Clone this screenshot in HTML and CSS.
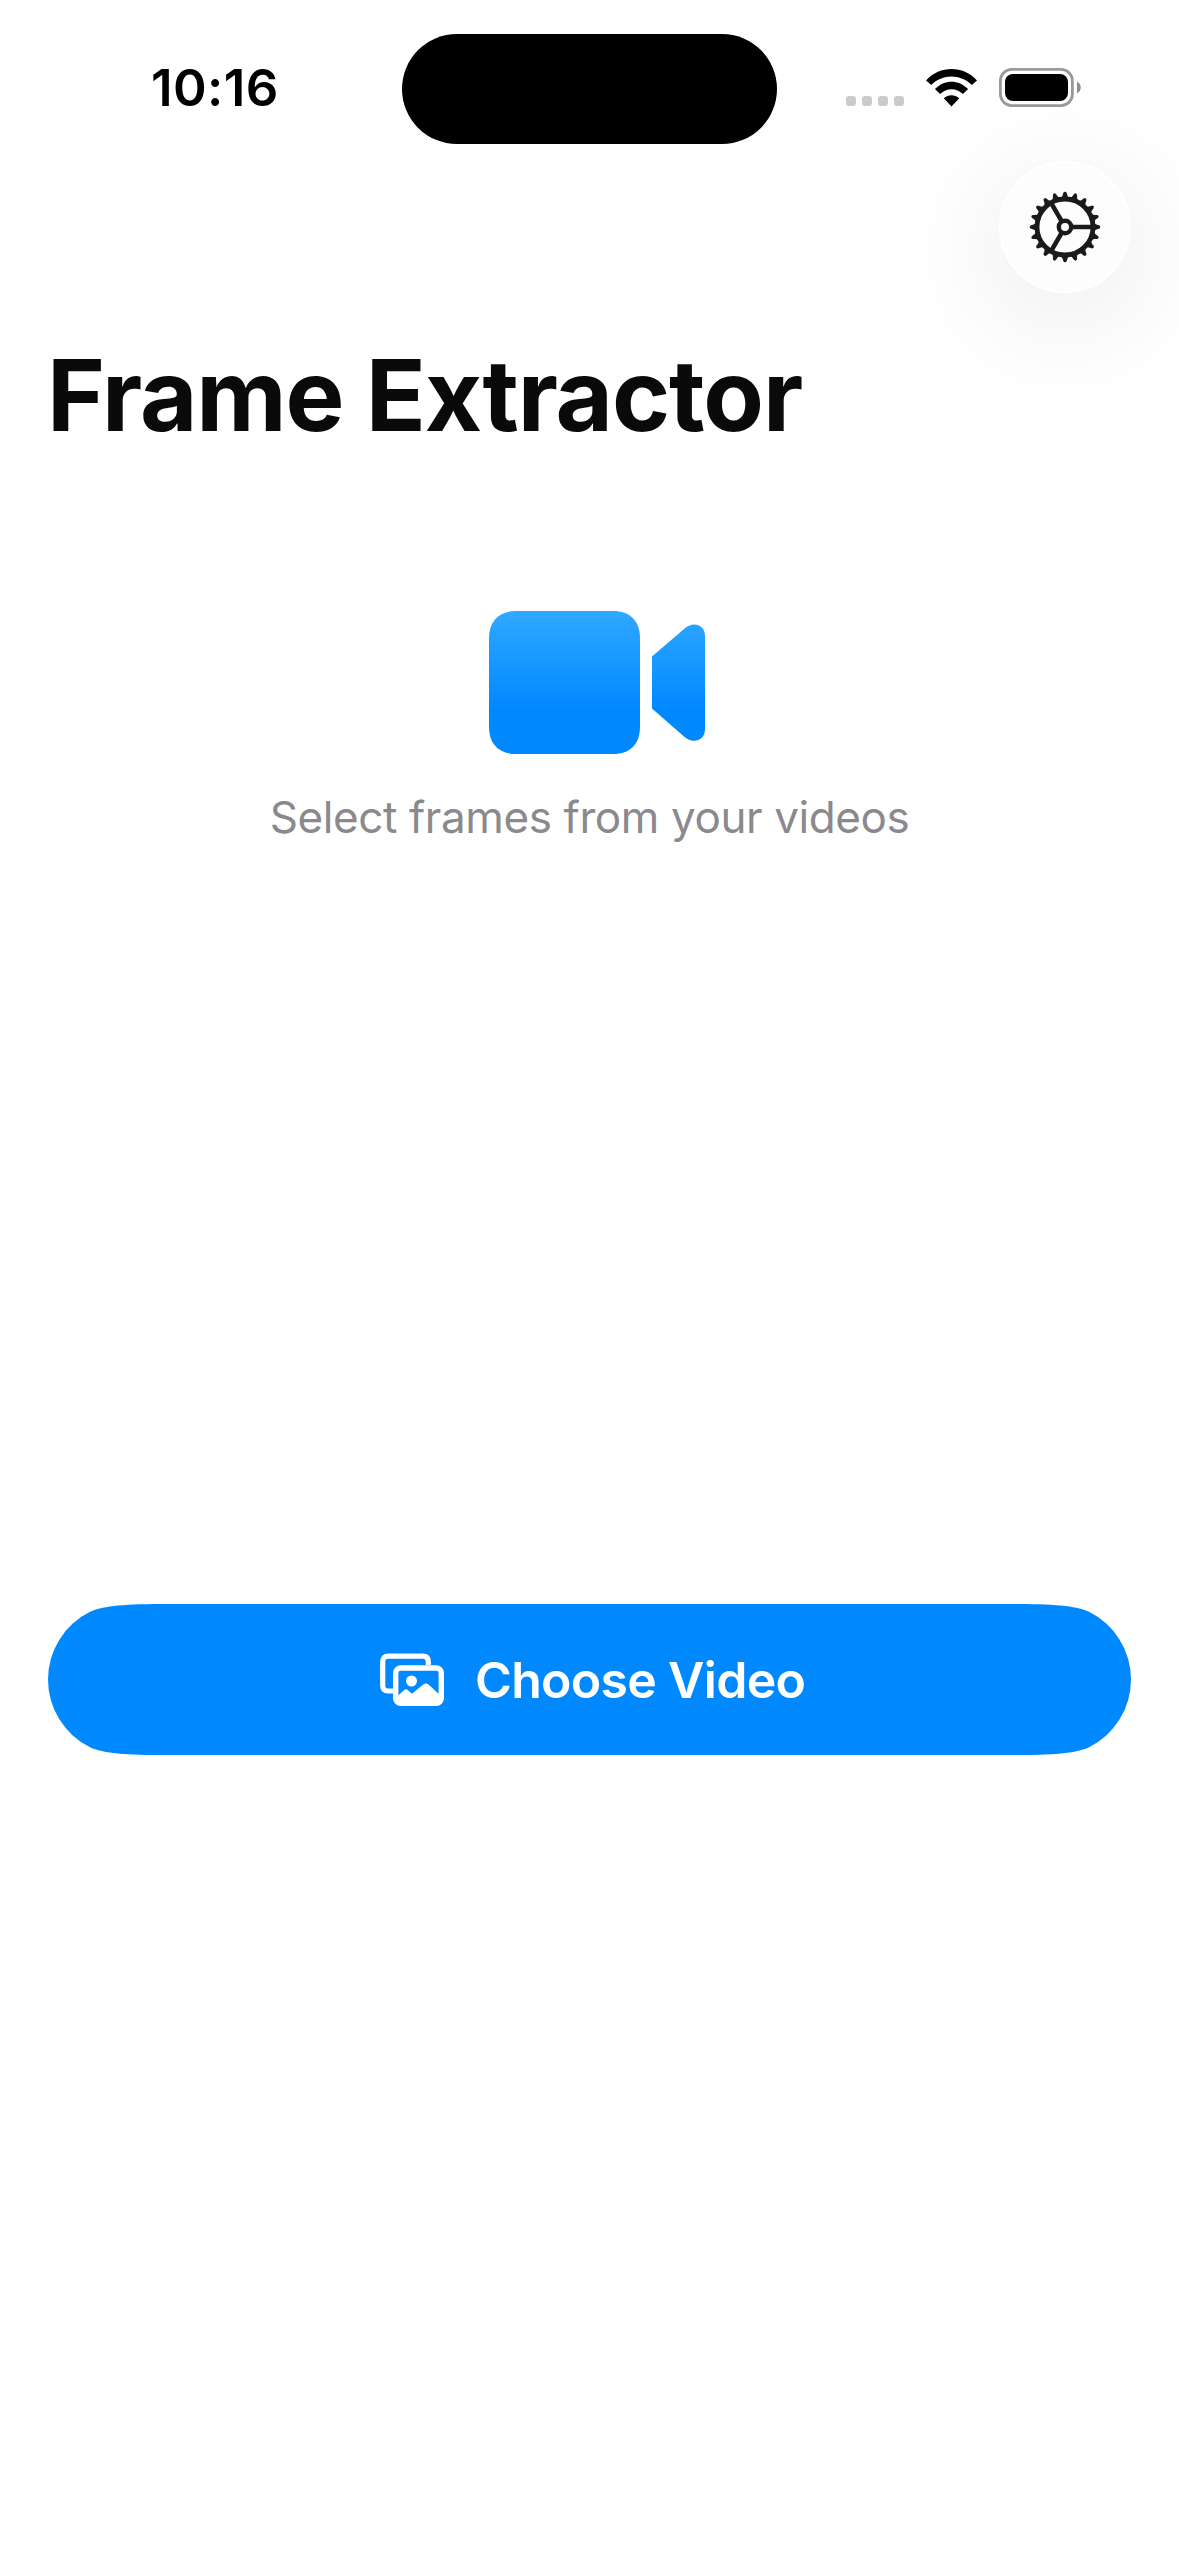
FILE: index.html
```html
<!DOCTYPE html>
<html lang="en">
<head>
<meta charset="utf-8">
<title>Frame Extractor</title>
<link rel="stylesheet" href="styles.css">
</head>
<body>
<div class="screen">
  <header class="status">
    <div class="status-left"><span class="time">10:16</span></div>
    <div class="island"></div>
    <div class="status-right">
      <div class="signal"><i></i><i></i><i></i><i></i></div>
      <svg class="wifi" width="51" height="38" viewBox="0 0 51 38">
        <path d="M0 11.400C14-3.700 37-3.700 51 11.400L45.800 16C34.500 4.500 16.500 4.500 5.200 16Z"/>
        <path d="M8.900 20C18.500 10.200 32.500 10.200 42.100 20L36.900 25C30.500 18.600 20.500 18.600 14.100 25Z"/>
        <path d="M17.800 29.300C22.300 25.100 28.700 25.100 33.200 29.300L25.500 37.500Z"/>
      </svg>
      <svg class="battery" width="82" height="39" viewBox="0 0 82 39">
        <rect x="1.400" y="1.400" width="72" height="36.200" rx="11.500" fill="none" stroke="#999" stroke-width="2.800"/>
        <rect x="6" y="6" width="63" height="27" rx="8"/>
        <path d="M78 13.500C83 16 83 23 78 25.500Z" fill="#8e8e8e"/>
      </svg>
    </div>
  </header>
  <nav class="toolbar">
    <button class="settings" aria-label="Settings">
      <svg width="72" height="72" viewBox="-36 -36 72 72">
        <defs>
          <path id="tooth" d="M29-3.900Q31.300-2.200 34-1.700Q35.300-1.200 35.300 0T34 1.700Q31.300 2.200 29 3.900Z"/>
          <g id="teeth">
            <use href="#tooth"/><use href="#tooth" transform="rotate(18)"/><use href="#tooth" transform="rotate(36)"/><use href="#tooth" transform="rotate(54)"/><use href="#tooth" transform="rotate(72)"/>
          </g>
        </defs>
        <g fill="#1a1a1a">
          <use href="#teeth"/><use href="#teeth" transform="rotate(90)"/>
          <use href="#teeth" transform="rotate(180)"/><use href="#teeth" transform="rotate(270)"/>
        </g>
        <g fill="none" stroke="#1a1a1a">
          <circle r="28" stroke-width="4.800"/>
          <circle r="6.200" stroke-width="4.400"/>
          <path d="M7 0H27M-3.500-6.060-13.500-23.400M-3.500 6.060-13.500 23.400" stroke-width="4.600"/>
        </g>
      </svg>
    </button>
  </nav>
  <h1 class="title">Frame Extractor</h1>
  <main class="hero">
    <svg class="camera" width="216" height="143" viewBox="0 0 216 143">
      <defs>
        <linearGradient id="sky" gradientUnits="userSpaceOnUse" x1="0" y1="0" x2="0" y2="143">
          <stop offset="0" stop-color="#30a8ff"/>
          <stop offset=".7" stop-color="#0088ff"/>
        </linearGradient>
      </defs>
      <g fill="url(#sky)">
        <path d="M27 0H124C141 0 151 10 151 27V116C151 133 141 143 124 143H27C10 143 0 133 0 116V27C0 10 10 0 27 0Z"/>
        <path d="M163 45.500 195 18C203 10 216 12.500 216 25V118C216 130.500 203 133 195 125.500L163 97.500Z"/>
      </g>
    </svg>
    <p class="caption">Select frames from your videos</p>
  </main>
  <button class="choose">
    <svg width="64" height="54" viewBox="0 0 64 54">
      <path d="M13 38H8.200Q2.700 38 2.700 32.500V8.700Q2.700 3.200 8.200 3.200H42.800Q48.300 3.200 48.300 8.700V12" fill="none" stroke="#fff" stroke-width="5.200"/>
      <rect x="15.700" y="15" width="45.600" height="35.300" rx="5" fill="none" stroke="#fff" stroke-width="5.400"/>
      <circle cx="31.500" cy="28" r="5.500" fill="#fff"/>
      <path d="M17 43.500 24 37.200Q26 35.500 28 37.200L32 40.800 43.500 31.300Q46 29.500 48.500 31.500L60 42V51H17Z" fill="#fff"/>
    </svg>
    <span class="choose-label">Choose Video</span>
  </button>
</div>
</body>
</html>
```

FILE: styles.css
```css
* { box-sizing: border-box; }

body {
  margin: 0;
  background: #fff;
  color: #000;
  font-family: Inter, "Liberation Sans", sans-serif;
}

.screen {
  display: flex;
  flex-direction: column;
  width: 1179px;
  height: 2556px;
  overflow: hidden;
  background: #fff;
}

.status {
  display: grid;
  grid-template-columns: 402px 375px 402px;
  height: 161px;
  padding-top: 34px;
}

.status-left {
  height: 110px;
  padding: 23px 0 0 151px;
}

.time {
  display: block;
  font-size: 51px;
  font-weight: 580;
  line-height: 62px;
  letter-spacing: .4px;
}

.island {
  height: 110px;
  border-radius: 55px;
  background: #000;
}

.status-right {
  display: flex;
  align-items: flex-start;
  padding: 34px 0 0 69px;
}

.signal {
  display: flex;
  gap: 6px;
  margin: 28px 22px 0 0;
}

.signal i {
  width: 10px;
  height: 10px;
  border-radius: 3px;
  background: #cbcbcb;
}

.wifi { margin: 1px 22px 0 0; }

.toolbar {
  display: flex;
  justify-content: flex-end;
  height: 132px;
  padding-right: 48px;
}

.settings {
  display: grid;
  place-items: center;
  width: 132px;
  height: 132px;
  padding: 0;
  border: 2px solid #fff;
  border-radius: 50%;
  background: #fdfdfd;
  box-shadow: 0 24px 125px rgba(0, 0, 0, .1);
}

.title {
  margin: 42px 0 0 47px;
  font-size: 99px;
  font-weight: 680;
  line-height: 120px;
  letter-spacing: -1.1px;
  color: #0a0a0a;
}

.hero {
  display: flex;
  flex-direction: column;
  align-items: center;
  height: 1149px;
  padding-top: 156px;
}

.camera { margin-left: 15px; }

.caption {
  margin: 36px 0 0;
  font-size: 44px;
  line-height: 54px;
  letter-spacing: -.4px;
  white-space: nowrap;
  color: #8a8a8e;
}

.choose {
  display: flex;
  align-items: center;
  gap: 31px;
  width: 1083px;
  height: 151px;
  margin-left: 48px;
  padding: 0 0 0 332px;
  border: 0;
  background: #08f;
  color: #fff;
  font-family: inherit;
  clip-path: path("M112 0C72 0 52 2.900 42 7.840A75.500 75.500 0 0 0 42 143.160C52 148.100 72 151 112 151H971C1011 151 1031 148.100 1041 143.160A75.500 75.500 0 0 0 1041 7.840C1031 2.900 1011 0 971 0Z");
}

.choose-label {
  font-size: 50px;
  font-weight: 570;
  line-height: 60px;
  letter-spacing: -.7px;
  white-space: nowrap;
}
```
